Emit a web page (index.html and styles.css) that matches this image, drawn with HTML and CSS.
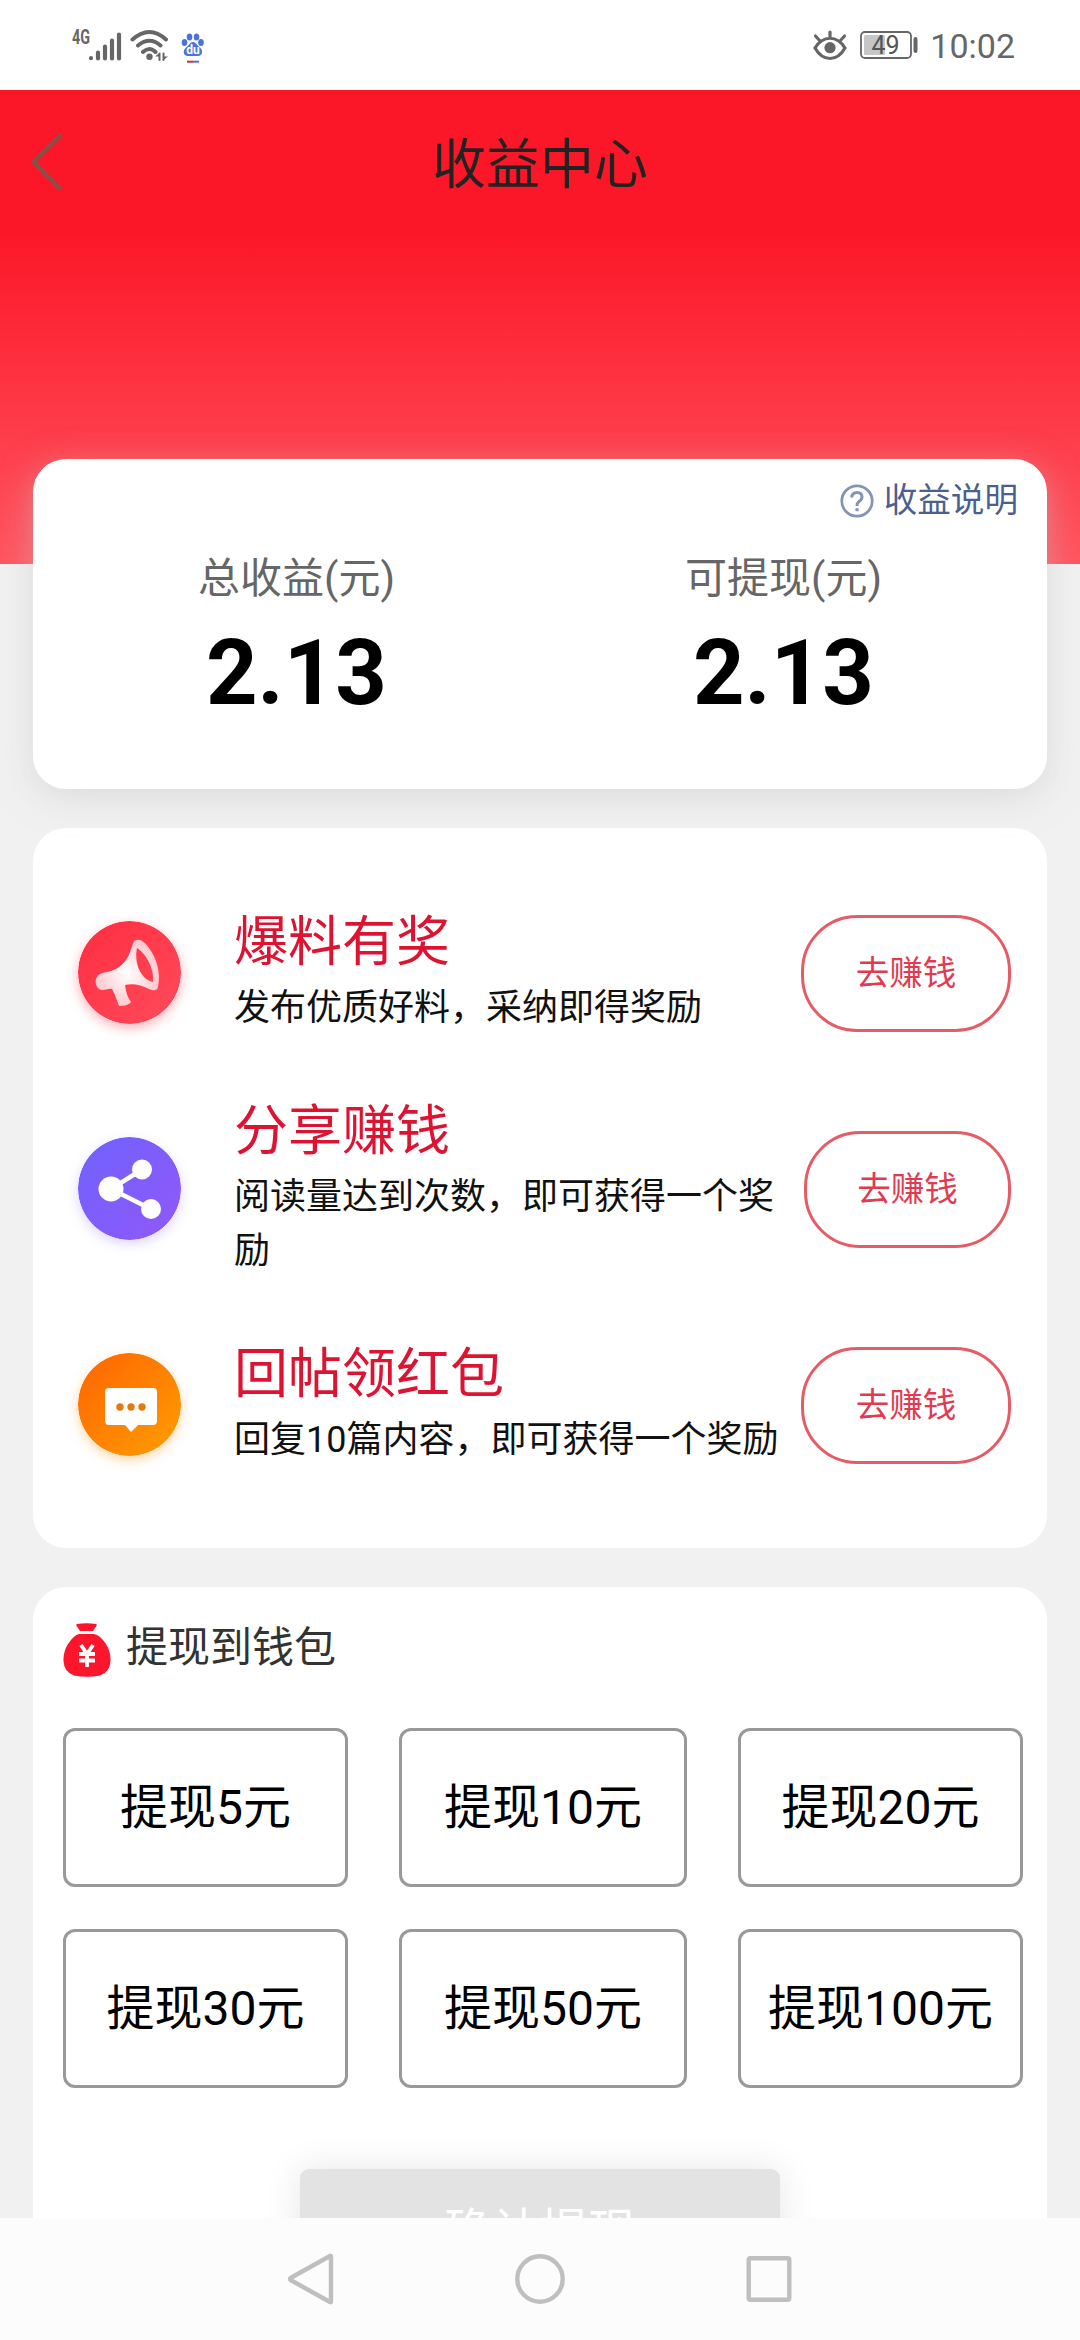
FILE: index.html
```html
<!DOCTYPE html>
<html lang="zh-CN">
<head>
<meta charset="utf-8">
<title>收益中心</title>
<link rel="stylesheet" href="styles.css">
</head>
<body>
<div class="screen">
  <header class="status">
    <div class="status-left">
      <svg class="signal" width="50" height="36" viewBox="0 0 50 36">
        <text class="net" x="0" y="16.500" textLength="18" lengthAdjust="spacingAndGlyphs">4G</text>
        <g stroke="#666" stroke-width="4.2" stroke-linecap="round"><path d="M19 31v.2M26 25.500v6M33 19.500v12M40 13.500v18M47 7.500v24"/></g>
      </svg>
      <svg class="wifi" width="40" height="36" viewBox="0 0 40 36" fill="none" stroke="#666" stroke-width="4" stroke-linecap="round">
        <path d="M2.500 12.500Q19.500 -2.500 36 12.500M8 18.500Q19.500 9 30.500 18.500M13 25Q19.500 19 25.500 25"/>
        <circle cx="19.500" cy="29.800" r="3.200" fill="#666" stroke="none"/>
        <path d="M25 29.500h4.500V26ZM38 29.500h-4.500V33Z" fill="#666" stroke="none"/><path d="M29.500 26.500v6.500M33.500 26.500v6.500" stroke-width="2"/>
      </svg>
      <svg class="paw" width="24" height="36" viewBox="0 0 24 36" fill="#4a74dc">
        <ellipse cx="3.500" cy="15.500" rx="2.800" ry="3.600"/><ellipse cx="8.500" cy="10" rx="2.800" ry="3.500"/><ellipse cx="15.500" cy="10" rx="2.800" ry="3.500"/><ellipse cx="20" cy="15.500" rx="2.800" ry="3.600"/>
        <path d="M12 15C15 15 16 18.500 19 20.500C22.500 23.500 21.500 29 17 29H7C2 29 1.500 23.500 5 20.500C8 18.500 9 15 12 15Z"/>
        <text class="du" x="12" y="27" text-anchor="middle">du</text>
        <path d="M6 34.700h6" stroke="#c8323c" stroke-width="2"/><path d="M12 34.700h6" stroke="#4a74dc" stroke-width="2"/>
      </svg>
    </div>
    <div class="status-right">
      <svg class="eye" width="34" height="32" viewBox="0 0 34 32" fill="none" stroke="#666" stroke-width="3.200" stroke-linecap="round">
        <path d="M2 19C10 6 24 6 32 19C24 33 10 33 2 19ZM17 8.500V3M7 12L2.500 7M27 12L31.500 7"/>
        <circle cx="17" cy="18.700" r="5.600" fill="#666" stroke="none"/>
      </svg>
      <svg class="battery" width="60" height="30" viewBox="0 0 60 30">
        <rect x="1" y="2" width="50" height="26" rx="4" fill="none" stroke="#666" stroke-width="1.800"/>
        <rect x="4" y="5" width="21" height="20" rx="1.500" fill="#c6c6c6"/>
        <rect x="53.500" y="7" width="4" height="16" rx="2" fill="#666"/>
        <text class="level" x="25.500" y="23.500" text-anchor="middle">49</text>
      </svg>
      <span class="clock">10:02</span>
    </div>
  </header>

  <main class="page">
    <section class="hero">
      <nav class="titlebar">
        <svg class="back" width="34" height="60" viewBox="0 0 34 60" fill="none" stroke="#88504c" stroke-width="4.200"><path d="M30.500 2.500L2.500 30L29.500 57.500"/></svg>
        <h1 class="title">收益中心</h1>
      </nav>
    </section>

    <section class="card summary">
      <a class="explain">
        <svg width="34" height="34" viewBox="0 0 34 34" fill="none" stroke="#8494b4" stroke-width="2.800">
          <circle cx="17" cy="17" r="15.200"/>
          <path d="M11.800 13.500Q11.800 8.500 17 8.500Q22 8.500 22 13Q22 15.500 19 17.500Q17 19 17 22" stroke-width="3"/><path d="M17 24.200v3" stroke-width="3.200"/>
        </svg>
        <span>收益说明</span>
      </a>
      <div class="totals">
        <div class="total"><span class="total-label">总收益(元)</span><strong class="total-value">2.13</strong></div>
        <div class="total"><span class="total-label">可提现(元)</span><strong class="total-value">2.13</strong></div>
      </div>
    </section>

    <section class="card tasks">
      <div class="task">
        <svg class="task-icon glow-red" width="103" height="103" viewBox="0 0 103 103">
          <defs><linearGradient id="red" x1="0" y1="0" x2="1" y2="1"><stop offset="0" stop-color="#ff2c40"/><stop offset="1" stop-color="#ff4c5c"/></linearGradient>
          <radialGradient id="horn"><stop offset="0" stop-color="#fff"/><stop offset="1" stop-color="#ffc9cf"/></radialGradient></defs>
          <circle cx="51.500" cy="51.500" r="51.500" fill="url(#red)"/>
          <path fill="url(#horn)" fill-rule="evenodd" d="M56 20C61 17 66 20 71 27C79 38 83 52 80 66C79 70 76 70 71 68C63 64 55 62 47 64C48 72 50 77 53 81C51 84 46 85 41 85C39 80 37 73 34 68C31 67 28 69 24 69C17 68 15 57 22 53C25 51 34 51 41 46C51 39 52 30 56 20ZM59 27C56 41 62 58 75 61C76 46 68 33 59 27Z"/>
        </svg>
        <div class="task-text"><h2>爆料有奖</h2><p>发布优质好料，采纳即得奖励</p></div>
        <button class="go">去赚钱</button>
      </div>
      <div class="task">
        <svg class="task-icon glow-purple" width="103" height="103" viewBox="0 0 103 103">
          <defs><linearGradient id="purple" x1="0" y1="0" x2="1" y2="1"><stop offset="0" stop-color="#7062ff"/><stop offset="1" stop-color="#9058f8"/></linearGradient></defs>
          <circle cx="51.500" cy="51.500" r="51.500" fill="url(#purple)"/>
          <g fill="#fff"><circle cx="33" cy="52" r="12.500"/><circle cx="64" cy="32.500" r="10"/><circle cx="73" cy="72" r="10"/></g>
          <path d="M64 32.500L33 52L73 72" fill="none" stroke="#fff" stroke-width="4.500"/>
        </svg>
        <div class="task-text"><h2>分享赚钱</h2><p>阅读量达到次数，即可获得一个奖励</p></div>
        <button class="go go-narrow">去赚钱</button>
      </div>
      <div class="task">
        <svg class="task-icon glow-orange" width="103" height="103" viewBox="0 0 103 103">
          <defs><linearGradient id="orange" x1="0" y1="0" x2="1" y2="1"><stop offset="0.100" stop-color="#ff6a00"/><stop offset="1" stop-color="#ff9e00"/></linearGradient></defs>
          <circle cx="51.500" cy="51.500" r="51.500" fill="url(#orange)"/>
          <path fill="#fff" d="M31 35H75Q79 35 79 39V68Q79 72 75 72H60L53 79L47 72H31Q27 72 27 68V39Q27 35 31 35Z"/>
          <g fill="#e8780c"><circle cx="42" cy="54" r="3.700"/><circle cx="53" cy="54" r="3.700"/><circle cx="64" cy="54" r="3.700"/></g>
        </svg>
        <div class="task-text"><h2>回帖领红包</h2><p>回复10篇内容，即可获得一个奖励</p></div>
        <button class="go">去赚钱</button>
      </div>
    </section>

    <section class="card withdraw">
      <div class="withdraw-head">
        <svg width="48" height="54" viewBox="0 0 48 54">
          <path fill="#fd152b" d="M14 1Q24 -.500 33 1Q35 2 32 5L30 8H17L15 5Q12 2 14 1ZM16 11H31Q37 12 43 21Q48 29 47.500 38Q47 49 37 52.500Q24 55 11 52.500Q1 49 .500 38Q0 29 5 21Q11 12 16 11Z"/>
          <path d="M18 22L24 31L30 22M24 31V44M16 31H32M16 37.500H32" fill="none" stroke="#fff" stroke-width="3.800"/>
        </svg>
        <span>提现到钱包</span>
      </div>
      <div class="amounts">
        <button class="amount">提现5元</button>
        <button class="amount">提现10元</button>
        <button class="amount">提现20元</button>
        <button class="amount">提现30元</button>
        <button class="amount">提现50元</button>
        <button class="amount">提现100元</button>
      </div>
      <button class="confirm">确认提现</button>
    </section>
  </main>

  <footer class="navkeys">
    <svg width="50" height="54" viewBox="0 0 50 54"><path d="M45 4.300V49.700Q45 50.500 44 50L4.500 28Q3.500 27 4.500 26L44 4Q45 3.500 45 4.300Z"/></svg>
    <svg width="54" height="54" viewBox="0 0 54 54"><circle cx="27" cy="27" r="22.700"/></svg>
    <svg width="50" height="54" viewBox="0 0 50 54"><rect x="4.700" y="6.200" width="40.600" height="41.600" rx="1.500"/></svg>
  </footer>
</div>
</body>
</html>
```
FILE: styles.css
```css
* { box-sizing: border-box; margin: 0; padding: 0; }
body { font-family: Roboto, "Noto Sans CJK SC", sans-serif; background: #f1f1f1; }
button { font: inherit; background: none; }
svg { display: block; flex: none; }

.screen { display: flex; flex-direction: column; width: 1080px; height: 2340px; overflow: hidden; }

.status { display: flex; justify-content: space-between; flex: none; height: 90px; padding: 0 65px 0 72px; background: #fff; color: #666; }
.status-left, .status-right { display: flex; align-items: center; }
.wifi { margin-left: 8px; }
.paw { margin-left: 11px; }
.battery { margin: 0 10px 0 13px; }
.clock { font-size: 34px; line-height: 40px; padding-top: 2px; }
.net { font: 700 20px Roboto, sans-serif; fill: #666; }
.du { font: 700 12px Roboto, sans-serif; fill: #fff; }
.level { font: 25px Roboto, sans-serif; fill: #555; }

.page { flex: 1; min-height: 0; overflow: hidden; }
.hero { height: 474px; background: linear-gradient(#fc1728 30%, #ff5560); }
.titlebar { display: grid; grid-template-columns: 34px 1fr 34px; align-items: center; height: 144px; padding: 0 31px; }
.title { grid-column: 2; padding-top: 8px; font-size: 54px; font-weight: 400; line-height: 80px; text-align: center; color: #222; }

.card { margin: 39px 33px 0; border-radius: 33px; background: #fff; }

.summary { position: relative; height: 330px; margin-top: -105px; padding: 22px 20px 0; box-shadow: 0 8px 34px rgba(200, 200, 200, .5); }
.explain { display: flex; justify-content: flex-end; align-items: center; gap: 10px; height: 40px; padding-right: 9px; font-size: 33.6px; line-height: 40px; color: #4b608e; }
.totals { display: grid; grid-template-columns: 1fr 1fr; margin-top: 28px; text-align: center; }
.total { display: flex; flex-direction: column; }
.total-label { font-size: 42px; line-height: 60px; color: #666; }
.total-value { font-size: 90px; line-height: 106px; margin-top: 12px; color: #000; }

.tasks { height: 720px; padding: 36px 36px 36px 45px; }
.task { display: grid; grid-template-columns: 103px 546px 1fr; column-gap: 53px; align-items: center; height: 216px; }
.task-icon { border-radius: 50%; }
.glow-red { box-shadow: 0 4px 12px rgba(255, 60, 80, .4); }
.glow-purple { box-shadow: 0 4px 12px rgba(120, 90, 255, .25); }
.glow-orange { box-shadow: 0 4px 12px rgba(255, 140, 0, .35); }
.task-text { padding-top: 5px; }
.task-text h2 { font-size: 54px; font-weight: 400; line-height: 58px; margin-bottom: 9px; color: #dd1331; }
.task-text p { font-size: 36px; line-height: 54px; color: #111; }
.go { justify-self: end; width: 210px; height: 117px; margin: 3px 0 0 -53px; padding-bottom: 6px; border: 3px solid #e65c66; border-radius: 56px; font-size: 33.6px; color: #e23a50; }
.go-narrow { width: 207px; }

.withdraw { height: 700px; padding: 30px 24px 0 30px; }
.withdraw-head { display: flex; align-items: center; gap: 15px; height: 66px; font-size: 42px; line-height: 60px; color: #333; }
.withdraw-head span { padding-bottom: 5px; }
.amounts { display: grid; grid-template-columns: 285px 288px 285px; gap: 42px 51px; margin-top: 45px; }
.amount { height: 159px; padding-bottom: 10px; border: 3px solid #999; border-radius: 12px; font-size: 48px; color: #000; }
.confirm { display: block; width: 480px; height: 126px; margin: 81px 0 0 237px; padding-bottom: 10px; border: 0; border-radius: 9px; background: #e3e3e3; font-size: 48px; color: #fff; box-shadow: 0 0 36px rgba(0, 0, 0, .1); }

.navkeys { position: relative; display: flex; justify-content: center; gap: 177px; flex: none; height: 122px; padding-top: 34px; background: #fcfcfc; }
.navkeys svg { fill: none; stroke: #bfbfbf; stroke-width: 4.4; stroke-linejoin: round; }
```
